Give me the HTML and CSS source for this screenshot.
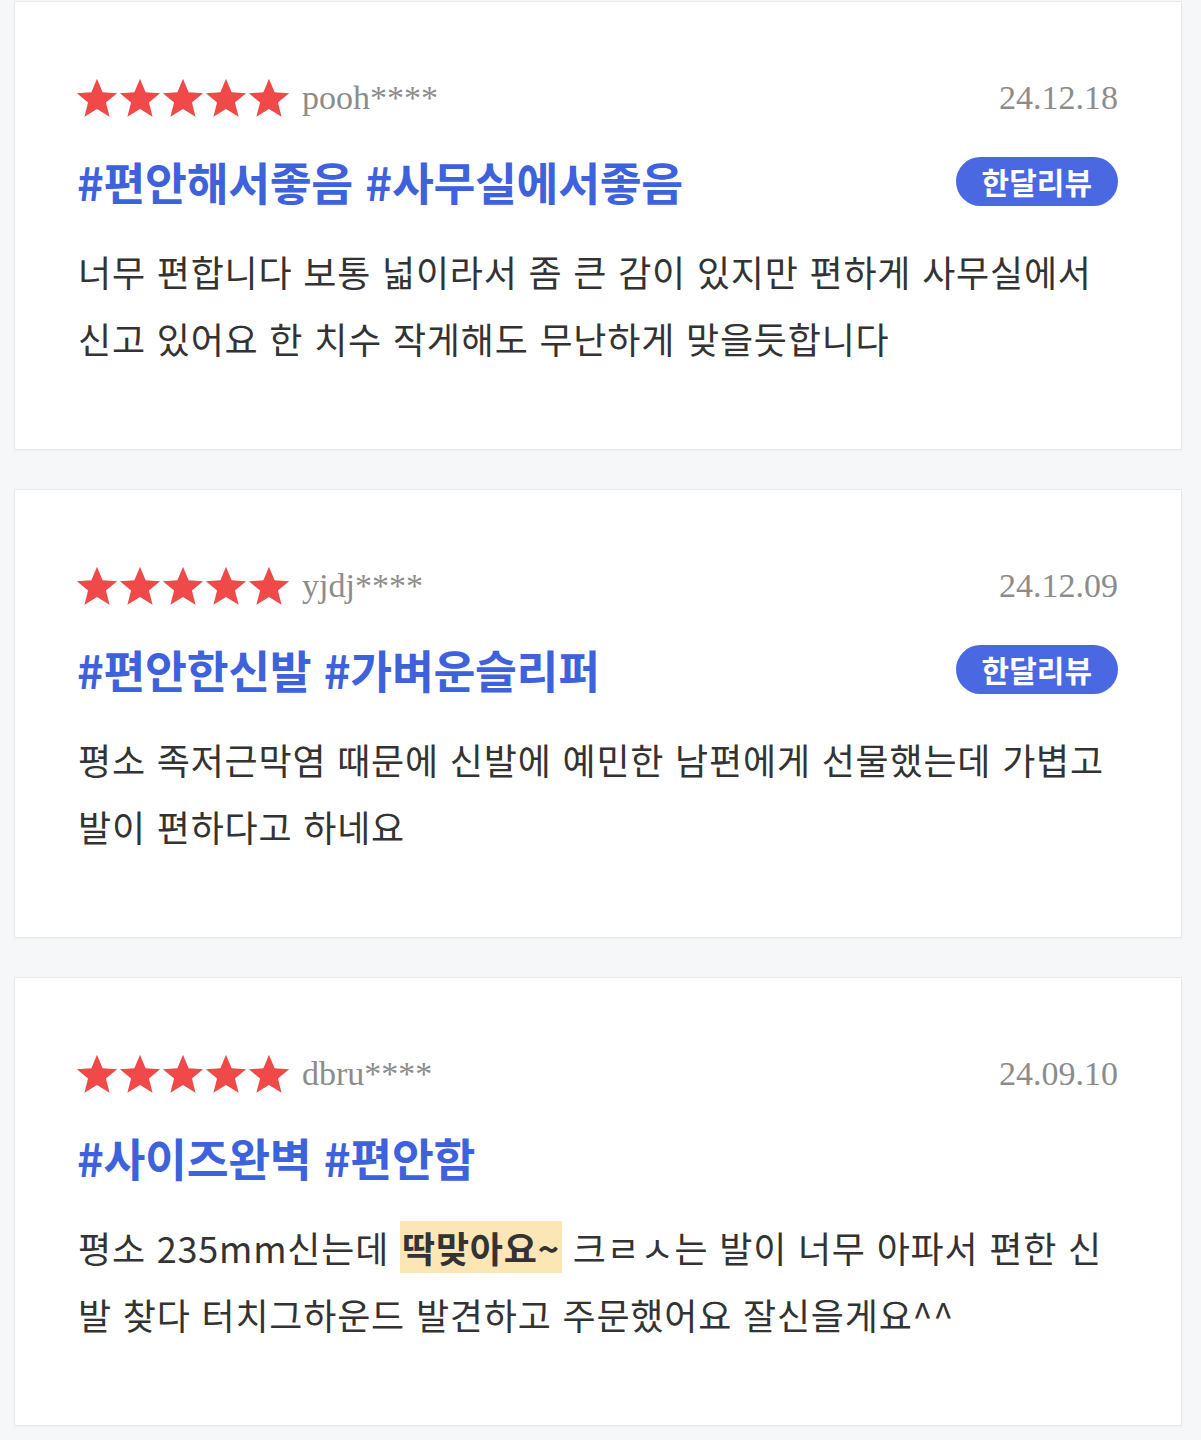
FILE: index.html
```html
<!DOCTYPE html>
<html lang="ko">
<head>
    <meta charset="UTF-8">
    <meta name="viewport" content="width=device-width, initial-scale=1.0">
    <title>리뷰</title>
    <link rel="stylesheet" href="styles.css">
</head>
<body>
    <svg width="0" height="0" class="defs">
        <defs>
            <symbol id="star" viewBox="0 0 24 24">
                <path d="M12 1l3.2 7.7 8.3.6-6.4 5.3 2.1 8.1L12 18.3l-7.2 4.4 2.1-8.1L.5 9.3l8.3-.6z"/>
            </symbol>
        </defs>
    </svg>

    <div class="reviews">
        <div class="card">
            <div class="meta">
                <div class="stars">
                    <svg><use href="#star"/></svg><svg><use href="#star"/></svg><svg><use href="#star"/></svg><svg><use href="#star"/></svg><svg><use href="#star"/></svg>
                </div>
                <span class="user">pooh****</span>
                <span class="date">24.12.18</span>
            </div>
            <div class="title-row">
                <h3 class="tags">#편안해서좋음 #사무실에서좋음</h3>
                <span class="badge">한달리뷰</span>
            </div>
            <p class="text">너무 편합니다 보통 넓이라서 좀 큰 감이 있지만 편하게 사무실에서 신고 있어요 한 치수 작게해도 무난하게 맞을듯합니다</p>
        </div>

        <div class="card">
            <div class="meta">
                <div class="stars">
                    <svg><use href="#star"/></svg><svg><use href="#star"/></svg><svg><use href="#star"/></svg><svg><use href="#star"/></svg><svg><use href="#star"/></svg>
                </div>
                <span class="user">yjdj****</span>
                <span class="date">24.12.09</span>
            </div>
            <div class="title-row">
                <h3 class="tags">#편안한신발 #가벼운슬리퍼</h3>
                <span class="badge">한달리뷰</span>
            </div>
            <p class="text">평소 족저근막염 때문에 신발에 예민한 남편에게 선물했는데 가볍고 발이 편하다고 하네요</p>
        </div>

        <div class="card">
            <div class="meta">
                <div class="stars">
                    <svg><use href="#star"/></svg><svg><use href="#star"/></svg><svg><use href="#star"/></svg><svg><use href="#star"/></svg><svg><use href="#star"/></svg>
                </div>
                <span class="user">dbru****</span>
                <span class="date">24.09.10</span>
            </div>
            <div class="title-row">
                <h3 class="tags">#사이즈완벽 #편안함</h3>
            </div>
            <p class="text">평소 235mm신는데 <mark>딱맞아요~</mark> 크ㄹㅅ는 발이 너무 아파서 편한 신발 찾다 터치그하운드 발견하고 주문했어요 잘신을게요^^</p>
        </div>
    </div>
</body>
</html>
```

FILE: styles.css
```css
body {
    margin: 0;
    background: #f6f7f9;
    font-family: "Noto Sans CJK KR", "Noto Sans", sans-serif;
}
.defs {
    position: absolute;
}
.reviews {
    display: flex;
    flex-direction: column;
    gap: 39px;
    padding: 1px 19px 14px 14px;
}
.card {
    background: #fff;
    border: 1px solid #e7e8eb;
    box-shadow: 0 1px 2px rgba(0,0,0,0.03);
    height: 449px;
    box-sizing: border-box;
    padding: 74px 63px 0 63px;
}
.meta {
    display: flex;
    align-items: center;
    height: 44px;
}
.stars {
    display: flex;
    gap: 1px;
    margin-left: -2px;
}
.stars svg {
    width: 42px;
    height: 42px;
    fill: #ef4949;
}
.user {
    font-family: "Liberation Serif", serif;
    font-size: 34px;
    color: #8c8c8c;
    margin-left: 12px;
}
.date {
    font-family: "Liberation Serif", serif;
    font-size: 34px;
    color: #8c8c8c;
    margin-left: auto;
}
.title-row {
    display: flex;
    align-items: center;
    justify-content: space-between;
    margin-top: 35px;
    height: 52px;
}
.tags {
    margin: 0 0 0 -1px;
    font-size: 45.5px;
    font-weight: 700;
    color: #3e61dc;
    letter-spacing: -0.3px;
}
.badge {
    background: #4a68e2;
    color: #fff;
    font-size: 30px;
    font-weight: 700;
    border-radius: 25px;
    height: 49px;
    line-height: 48px;
    padding: 0 26px;
}
.text {
    margin: 31px 0 0;
    font-size: 36px;
    line-height: 67px;
    letter-spacing: 0.8px;
    color: #333;
}
.text mark {
    background: #fde6b5;
    color: #333;
    font-weight: 700;
    padding: 0 2px;
}
```
